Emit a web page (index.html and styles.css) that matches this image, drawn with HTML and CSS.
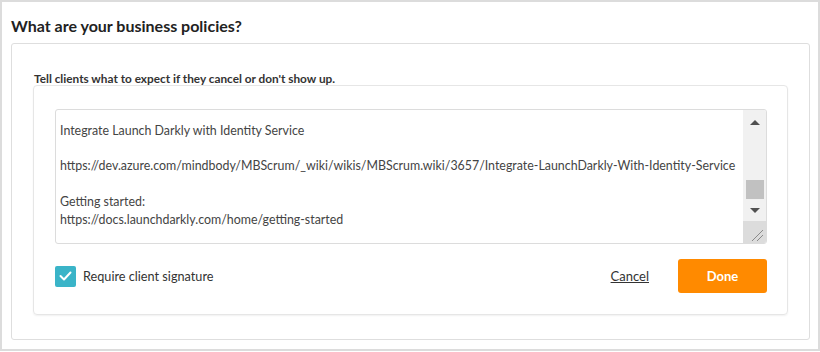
FILE: index.html
```html
<!DOCTYPE html>
<html>
<head>
<meta charset="utf-8">
<link rel="stylesheet" href="styles.css">
</head>
<body>
<div class="frame">
  <h1 class="title">What are your business policies?</h1>
  <div class="card">
    <div class="label">Tell clients what to expect if they cancel or don't show up.</div>
    <div class="panel">
      <div class="textarea">
        <div class="text">
          <p>Integrate Launch Darkly with Identity Service</p>
          <p>&nbsp;</p>
          <p>https://dev.azure.com/mindbody/MBScrum/_wiki/wikis/MBScrum.wiki/3657/Integrate-LaunchDarkly-With-Identity-Service</p>
          <p>&nbsp;</p>
          <p>Getting started:</p>
          <p>https://docs.launchdarkly.com/home/getting-started</p>
        </div>
        <div class="scrollbar">
          <div class="arrow up"></div>
          <div class="track"><div class="thumb"></div></div>
          <div class="arrow down"></div>
          <div class="corner">
            <svg width="22" height="22" viewBox="0 0 22 22"><path d="M9 20 L20 9 M14 20 L20 14" stroke="#8a8a8a" stroke-width="1" fill="none"/></svg>
          </div>
        </div>
      </div>
      <div class="footer">
        <label class="check">
          <span class="box"><svg width="13" height="10" viewBox="0 0 13 10"><path d="M1.5 5 L5 8.5 L11.5 1.5" stroke="#fff" stroke-width="2" fill="none" stroke-linecap="round" stroke-linejoin="round"/></svg></span>
          <span>Require client signature</span>
        </label>
        <div class="actions">
          <a class="cancel">Cancel</a>
          <button class="done">Done</button>
        </div>
      </div>
    </div>
  </div>
</div>
</body>
</html>
```
FILE: styles.css
```css
* { box-sizing: border-box; }
html, body { margin: 0; padding: 0; background: #fff; }
body { font-family: Lato, "Open Sans", sans-serif; color: #333; }
.frame {
  width: 820px;
  height: 351px;
  border: 2px solid #dcdcdc;
  padding: 0 8px 9px 9px;
  display: flex;
  flex-direction: column;
}
.title {
  margin: 0;
  font-size: 16px;
  font-weight: 700;
  color: #222;
  height: 41px;
  padding-top: 14px;
  line-height: 19px;
}
.card {
  flex: 1;
  border: 1px solid #dedede;
  border-radius: 3px;
  padding: 0 21px 0 21px;
  display: flex;
  flex-direction: column;
}
.label {
  font-size: 11.8px;
  font-weight: 700;
  color: #333;
  padding-top: 28px;
  height: 41px;
  line-height: 14px;
  padding-left: 1px;
}
.panel {
  border: 1px solid #e6e6e6;
  border-radius: 4px;
  box-shadow: 0 1px 2px rgba(0,0,0,0.06);
  padding: 23px 20px 21px 21px;
  height: 230px;
}
.textarea {
  display: flex;
  height: 135px;
  border: 1px solid #dcdcdc;
  border-radius: 3px;
  overflow: hidden;
}
.text {
  flex: 1;
  padding: 12px 4px 0 4px;
  font-size: 12.4px;
  line-height: 17.7px;
  color: #444;
  white-space: nowrap;
  overflow: hidden;
}
.text p { margin: 0; }
.scrollbar {
  width: 23px;
  background: #f1f1f1;
  display: flex;
  flex-direction: column;
  align-items: center;
}
.arrow { width: 0; height: 0; border-left: 5px solid transparent; border-right: 5px solid transparent; }
.arrow.up { border-bottom: 5px solid #505050; margin-top: 10px; }
.arrow.down { border-top: 5px solid #505050; margin-top: 9px; }
.track { flex: 1; width: 100%; display: flex; align-items: flex-end; justify-content: center; }
.thumb { width: 18px; height: 19px; background: #c1c1c1; }
.corner { width: 23px; height: 22px; background: #dcdcdc; margin-top: 8px; }
.corner svg { display: block; }
.footer {
  display: flex;
  align-items: center;
  justify-content: space-between;
  margin-top: 15px;
  height: 34px;
}
.check { display: flex; align-items: center; gap: 7px; font-size: 12.7px; color: #333; }
.box {
  width: 21px; height: 21px; border-radius: 2px;
  background: #3ab4c8;
  display: flex; align-items: center; justify-content: center;
}
.actions { display: flex; align-items: center; gap: 29px; }
.cancel { font-size: 13px; color: #333; text-decoration: underline; }
.done {
  width: 89px; height: 34px;
  background: #ff8a00;
  border: none; border-radius: 3px;
  color: #fff;
  font-family: Lato, sans-serif;
  font-size: 13px;
  font-weight: 700;
}
```
